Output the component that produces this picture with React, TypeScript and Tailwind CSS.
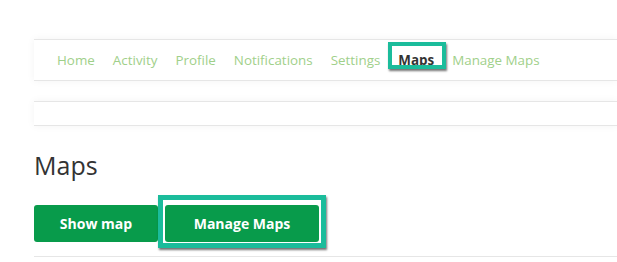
const tabs = [
  { label: "Home" },
  { label: "Activity" },
  { label: "Profile" },
  { label: "Notifications" },
  { label: "Settings" },
  { label: "Maps", active: true },
  { label: "Manage Maps" },
];

export default function App() {
  return (
    <div
      className="min-h-[262px] w-[617px] overflow-hidden bg-white pl-[34px] pt-[39px] text-[#333]"
      style={{ fontFamily: "'Open Sans', 'Liberation Sans', sans-serif" }}
    >
      <nav className="flex h-[42px] items-center border-y border-[#e6e6e6] bg-white pl-[14px] shadow-[0_0_8px_rgba(0,0,0,0.05)]">
        {tabs.map((tab) => (
          <span
            key={tab.label}
            className={
              tab.active
                ? "relative whitespace-nowrap px-[9px] text-[13.4px] leading-[20px] font-bold text-[#333]"
                : "whitespace-nowrap px-[9px] text-[13.4px] leading-[20px] text-[#9fd08a]"
            }
          >
            {tab.label}
            {tab.active && (
              <span className="pointer-events-none absolute -top-[8px] -left-[1px] -right-[3px] bottom-[1px] border-[4px] border-[#1bbc9b] shadow-[1px_2px_2px_rgba(0,0,0,0.55)]" />
            )}
          </span>
        ))}
      </nav>

      <div className="mt-[20px] h-[25px] border-y border-[#e6e6e6] bg-white shadow-[0_0_8px_rgba(0,0,0,0.05)]" />

      <h1 className="mt-[24px] text-[25px] leading-[30px] font-normal text-[#333]">Maps</h1>

      <div className="mt-[25px] flex items-center gap-[7px]">
        <button className="h-[37px] w-[124px] rounded-[3px] bg-[#089b4b] text-[14px] font-bold text-white">
          Show map
        </button>
        <div className="relative">
          <button className="h-[37px] w-[154px] rounded-[3px] bg-[#089b4b] text-[14px] font-bold text-white">
            Manage Maps
          </button>
          <span className="pointer-events-none absolute -top-[10px] -left-[7px] -right-[7px] -bottom-[6px] border-[5px] border-[#1bbc9b] shadow-[1px_2px_2px_rgba(0,0,0,0.55)]" />
        </div>
      </div>

      <div className="mt-[14px] border-t border-[#e6e6e6]" />
    </div>
  );
}
